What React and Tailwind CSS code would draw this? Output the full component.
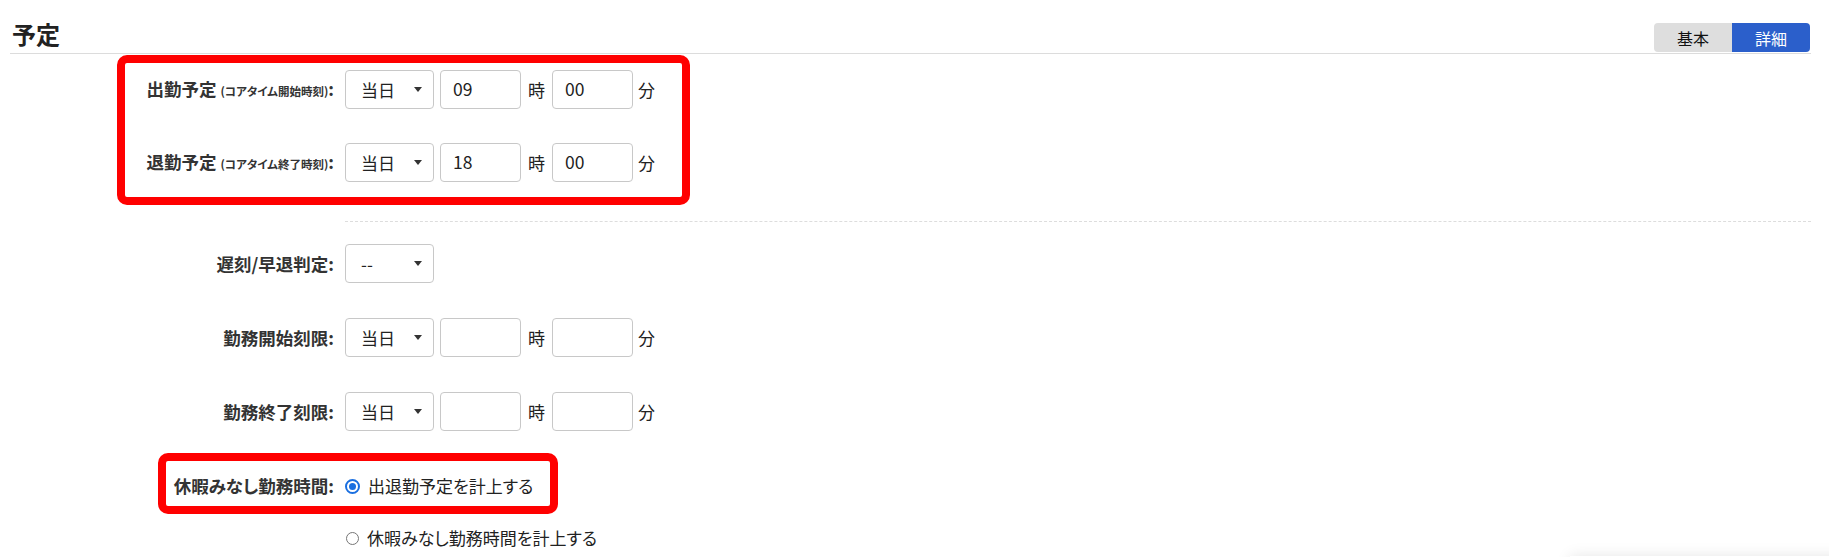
import React from 'react';

const Caret = () => (
    <svg width="8" height="5" viewBox="0 0 8 5" className="shrink-0">
        <path d="M0 0h8L4 5z" fill="#333" />
    </svg>
);

const DaySelect = ({ value = '当日' }) => (
    <div className="flex h-[39px] w-[89px] items-center justify-between rounded-[4px] border border-[#c8c8c8] bg-white pl-[15px] pr-[11px] text-[17px] text-[#222]">
        <span>{value}</span>
        <Caret />
    </div>
);

const TimeInput = ({ value }) => (
    <div className="flex h-[39px] w-[81px] items-center rounded-[4px] border border-[#c8c8c8] bg-white pl-[12px] text-[17.5px] text-[#222]">
        {value}
    </div>
);

const TimeFields = ({ hour, minute }) => (
    <div className="flex items-center text-[17px] text-[#222]">
        <DaySelect />
        <div className="ml-[6px]"><TimeInput value={hour} /></div>
        <span className="mx-[7px]">時</span>
        <TimeInput value={minute} />
        <span className="ml-[5px]">分</span>
    </div>
);

// label column is right aligned, controls start 11px after it
const Row = ({ labelWidth, label, children }) => (
    <div className="flex items-center">
        <div style={{ width: labelWidth }} className="shrink-0 whitespace-nowrap text-right text-[17.5px] font-bold leading-6 text-[#333] [font-feature-settings:'palt']">
            {label}
        </div>
        <div className="ml-[11px]">{children}</div>
    </div>
);

const Radio = ({ checked, label }) => (
    <div className="flex h-6 items-center text-[17px] text-[#222] [font-feature-settings:'palt']">
        {checked ? (
            <span className="flex h-[15px] w-[15px] items-center justify-center rounded-full border-2 border-[#1a6fe0]">
                <span className="h-[7px] w-[7px] rounded-full bg-[#1a6fe0]" />
            </span>
        ) : (
            <span className="ml-[1px] h-[13px] w-[13px] rounded-full border border-[#767676]" />
        )}
        <span className="ml-[8px]">{label}</span>
    </div>
);

export default function App() {
    return (
        <div className="relative h-[557px] overflow-hidden bg-white font-['Noto_Sans_CJK_JP',sans-serif]">
            <div className="ml-[10px] flex h-[54px] w-[1801px] items-end justify-between border-b border-[#dcdcdc]">
                <h2 className="pb-[7px] pl-[2px] text-[24px] font-bold leading-[24px] text-[#222]">予定</h2>
                <div className="mb-[1px] mr-[1px] flex h-[29px] overflow-hidden rounded-[4px] text-[16px]">
                    <button className="w-[78px] bg-[#dedede] text-[#111]">基本</button>
                    <button className="w-[78px] bg-[#2b5fcb] text-white">詳細</button>
                </div>
            </div>

            <div className="ml-[117px] mt-[1px] flex w-[573px] flex-col gap-[34px] rounded-[10px] border-8 border-[#ff0000] pb-[15px] pt-[7px]">
                <Row
                    labelWidth={209}
                    label={<>出勤予定 <span className="text-[11.5px]">(コアタイム開始時刻)</span>:</>}
                >
                    <TimeFields hour="09" minute="00" />
                </Row>
                <Row
                    labelWidth={209}
                    label={<>退勤予定 <span className="text-[11.5px]">(コアタイム終了時刻)</span>:</>}
                >
                    <TimeFields hour="18" minute="00" />
                </Row>
            </div>

            <div className="ml-[345px] mt-[16px] w-[1466px] border-t border-dashed border-[#dddddd]" />

            <div className="mt-[22px] flex flex-col gap-[35px]">
                <Row labelWidth={334} label="遅刻/早退判定:">
                    <DaySelect value="--" />
                </Row>
                <Row labelWidth={334} label="勤務開始刻限:">
                    <TimeFields />
                </Row>
                <Row labelWidth={334} label="勤務終了刻限:">
                    <TimeFields />
                </Row>
            </div>

            <div className="ml-[158px] mt-[22px] w-[400px] rounded-[10px] border-8 border-[#ff0000] pb-[8px] pt-[13px]">
                <Row labelWidth={168} label="休暇みなし勤務時間:">
                    <Radio checked label="出退勤予定を計上する" />
                </Row>
            </div>

            <div className="ml-[345px] mt-[12px]">
                <Radio label="休暇みなし勤務時間を計上する" />
            </div>

            <div className="absolute left-[1570px] top-[556px] h-[60px] w-[300px] bg-white shadow-[0_0_14px_rgba(0,0,0,0.10)]" />
        </div>
    );
}
